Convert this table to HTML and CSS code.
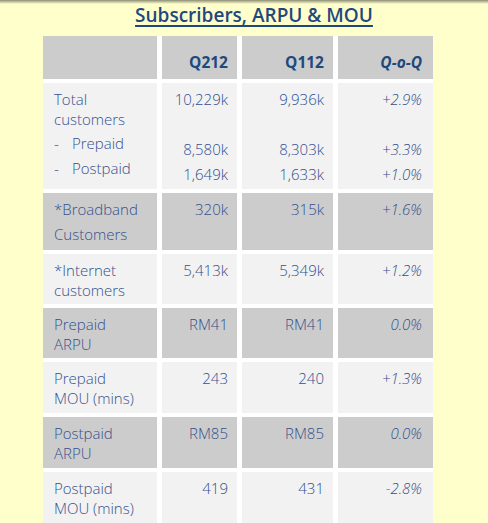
FILE: index.html
```html
<!DOCTYPE html>
<html>
<head>
<meta charset="utf-8">
<link rel="stylesheet" href="styles.css">
</head>
<body>
<div class="page">
  <div class="strip"></div>
  <h1 class="title"><span>Subscribers, ARPU &amp; MOU</span></h1>
  <div class="grid">
    <div class="cell hd"></div>
    <div class="cell hd num">Q212</div>
    <div class="cell hd num">Q112</div>
    <div class="cell hd num pct">Q-o-Q</div>

    <div class="cell lt lbl first">
      <div class="l19">Total</div>
      <div class="l19">customers</div>
      <div class="sub"><span class="dash">-</span>Prepaid</div>
      <div class="sub"><span class="dash">-</span>Postpaid</div>
    </div>
    <div class="cell lt num first tall"><div>10,229k</div><div>&nbsp;</div><div>8,580k</div><div>1,649k</div></div>
    <div class="cell lt num first tall"><div>9,936k</div><div>&nbsp;</div><div>8,303k</div><div>1,633k</div></div>
    <div class="cell lt num pct first tall"><div>+2.9%</div><div>&nbsp;</div><div>+3.3%</div><div>+1.0%</div></div>

    <div class="cell dk lbl tall"><div>*Broadband</div><div>Customers</div></div>
    <div class="cell dk num tall">320k</div>
    <div class="cell dk num tall">315k</div>
    <div class="cell dk num pct tall">+1.6%</div>

    <div class="cell lt lbl">*Internet<br>customers</div>
    <div class="cell lt num">5,413k</div>
    <div class="cell lt num">5,349k</div>
    <div class="cell lt num pct">+1.2%</div>

    <div class="cell dk lbl">Prepaid<br>ARPU</div>
    <div class="cell dk num">RM41</div>
    <div class="cell dk num">RM41</div>
    <div class="cell dk num pct">0.0%</div>

    <div class="cell lt lbl">Prepaid<br>MOU (mins)</div>
    <div class="cell lt num">243</div>
    <div class="cell lt num">240</div>
    <div class="cell lt num pct">+1.3%</div>

    <div class="cell dk lbl">Postpaid<br>ARPU</div>
    <div class="cell dk num">RM85</div>
    <div class="cell dk num">RM85</div>
    <div class="cell dk num pct">0.0%</div>

    <div class="cell lt lbl">Postpaid<br>MOU (mins)</div>
    <div class="cell lt num">419</div>
    <div class="cell lt num">431</div>
    <div class="cell lt num pct">-2.8%</div>
  </div>
</div>
</body>
</html>
```

FILE: styles.css
```css
html, body {
  margin: 0;
  padding: 0;
  background: #ffffcc;
}
.page {
  width: 488px;
  height: 523px;
  overflow: hidden;
  background: #ffffcc;
  font-family: "Open Sans", "DejaVu Sans", sans-serif;
  color: #34508e;
}
.strip {
  height: 4px;
  background: linear-gradient(#8c8c74, #c8c8a0 50%, #ffffcc);
}
.title {
  margin: 0;
  height: 32px;
  padding-left: 20px;
  text-align: center;
  font-size: 19px;
  font-weight: 600;
  line-height: 22px;
  color: #1f497d;
}
.title span {
  text-decoration: underline;
  text-decoration-thickness: 2px;
  text-underline-offset: 3px;
}
.grid {
  margin-left: 43px;
  width: 390px;
  display: grid;
  grid-template-columns: 114px 75px 91px 95px;
  grid-template-rows: 43px 106px 57px 50px 50px 51px 51px 52px;
  column-gap: 5px;
  row-gap: 4px;
  background: #ffffff;
}
.cell {
  box-sizing: border-box;
  font-size: 15px;
  font-weight: 300;
  line-height: 20px;
  padding-top: 6px;
}
.hd {
  background: #cccccc;
  font-weight: 700;
  font-size: 15.5px;
  color: #1f497d;
  padding-top: 16px;
}
.lt { background: #f2f2f2; }
.dk { background: #cccccc; }
.lbl { padding-left: 11px; }
.num { text-align: right; padding-right: 9px; }
.pct { font-style: italic; padding-right: 11px; }
.tall { line-height: 25px; padding-top: 4px; }
.first.lbl { padding-top: 6px; }
.l19 { line-height: 20px; }
.sub { line-height: 25px; }
.l19 + .sub { margin-top: 2px; }
.dash {
  display: inline-block;
  width: 18px;
}
```
